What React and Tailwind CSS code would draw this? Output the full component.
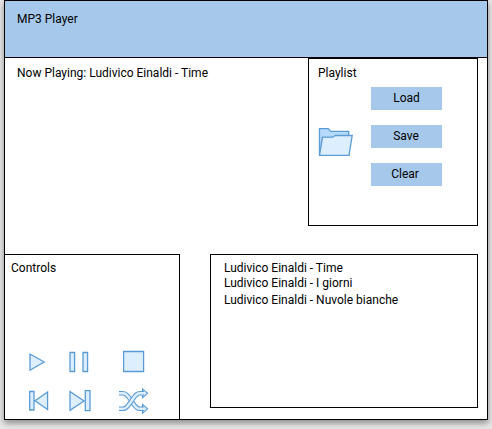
const stroke = '#5b9bd5';
const fill = '#ddeeff';

function Icon({ width, height, className = '', children }) {
  return (
    <svg
      width={width}
      height={height}
      viewBox={`0 0 ${width} ${height}`}
      fill={fill}
      stroke={stroke}
      strokeWidth="1.3"
      className={`block shrink-0 ${className}`}
    >
      {children}
    </svg>
  );
}

function PlayIcon() {
  return (
    <Icon width={18} height={20} className="ml-6 mt-[11px]">
      <path d="M1 2v16.200L15.200 10z" />
    </Icon>
  );
}

function PauseIcon() {
  return (
    <Icon width={22} height={22} className="ml-[22px] mt-[10px]">
      <path d="M1 1.500h4.600v19H1zM14 1.500h4.600v19H14z" />
    </Icon>
  );
}

function StopIcon() {
  return (
    <Icon width={23} height={23} className="ml-8 mt-[9px]">
      <path d="M.6 1.500h20v20h-20z" />
    </Icon>
  );
}

function PreviousIcon() {
  return (
    <Icon width={22} height={24} className="ml-6 mt-[6px]">
      <path d="M.7 3.500h4.300v18.500H.7zM18.600 4v17.600L6 12.800z" />
    </Icon>
  );
}

function NextIcon() {
  return (
    <Icon width={24} height={24} className="ml-[18px] mt-[6px]">
      <path d="M1 3.500v18.800L15 13zM16.300 2.700h4.700v20h-4.700z" />
    </Icon>
  );
}

const strandDown = 'M1 7.300H4.500C8 7.300 9 9 12.500 13.500L15.500 18C18 21.300 19 22.800 22 22.800H26';
const strandUp = 'M1 22.800H4.500C8 22.800 9 21 12.500 16.500L15.500 12C18 8.700 19 7.300 22 7.300H26';

function ShuffleIcon() {
  return (
    <Icon width={31} height={30} className="ml-[25px] mt-1">
      <path d="M24.500 2.900l5 4.400-5 4.400zM24.500 18.400l5 4.400-5 4.400z" strokeWidth="1.1" />
      <g fill="none">
        <path d={strandDown} strokeWidth="4.600" />
        <path d={strandDown} strokeWidth="2.500" stroke={fill} />
        <path d={strandUp} strokeWidth="4.600" />
        <path d={strandUp} strokeWidth="2.500" stroke={fill} />
      </g>
    </Icon>
  );
}

function FolderIcon() {
  return (
    <Icon width={36} height={30} className="ml-[9px] mt-[69px]">
      <path d="M1.500 27.400V.7h8.800l2.200 2.600h18.200v24.100z" fill="#b5dafb" />
      <path d="M1.500 27.400L4.500 9.200h10l3-1.700h16.700l-3.200 19.900z" />
    </Icon>
  );
}

function PlaylistButton({ children, nudge = '' }) {
  return (
    <button className="flex h-[23px] w-[71px] justify-center bg-[#a6c9eb] pt-[3px] leading-4">
      <span className={nudge}>{children}</span>
    </button>
  );
}

export default function App() {
  return (
    <div className="h-[429px] w-[492px] overflow-hidden bg-[#e6e6e6] pl-1 font-['Roboto',sans-serif] text-[12px] leading-4 text-black">
      <div className="flex h-[420px] w-[484px] flex-col border border-black bg-white shadow-[0_3px_6px_rgba(0,0,0,0.4)]">
        <header className="h-[57px] shrink-0 border-b border-black bg-[#a6c9eb] pl-3 pt-[10px]">
          MP3 Player
        </header>

        <div className="flex h-[168px] shrink-0 pr-[9px]">
          <div className="flex-1 pl-3 pt-[7px]">Now Playing: Ludivico Einaldi - Time</div>
          <section className="flex w-[170px] border border-black">
            <div className="w-[62px] shrink-0">
              <h2 className="ml-[9px] h-0 whitespace-nowrap">
                <span className="block translate-y-[6px]">Playlist</span>
              </h2>
              <FolderIcon />
            </div>
            <div className="flex flex-col gap-[15px] pt-7">
              <PlaylistButton>Load</PlaylistButton>
              <PlaylistButton nudge="pr-px">Save</PlaylistButton>
              <PlaylistButton nudge="pr-[3px]">Clear</PlaylistButton>
            </div>
          </section>
        </div>

        <div className="mt-7 flex h-[165px] items-start">
          <section className="flex h-full w-[175px] flex-col border-r border-t border-black">
            <h2 className="h-[86px] shrink-0 pl-[6px] pt-[5px]">Controls</h2>
            <div className="flex h-[41px] items-start">
              <PlayIcon />
              <PauseIcon />
              <StopIcon />
            </div>
            <div className="flex h-[37px] items-start">
              <PreviousIcon />
              <NextIcon />
              <ShuffleIcon />
            </div>
          </section>
          <ul className="ml-[30px] h-[154px] w-[268px] border border-black pl-[13px] pt-[5px]">
            <li>Ludivico Einaldi - Time</li>
            <li className="-mt-px">Ludivico Einaldi - I giorni</li>
            <li className="mt-px">Ludivico Einaldi - Nuvole bianche</li>
          </ul>
        </div>
      </div>
    </div>
  );
}
